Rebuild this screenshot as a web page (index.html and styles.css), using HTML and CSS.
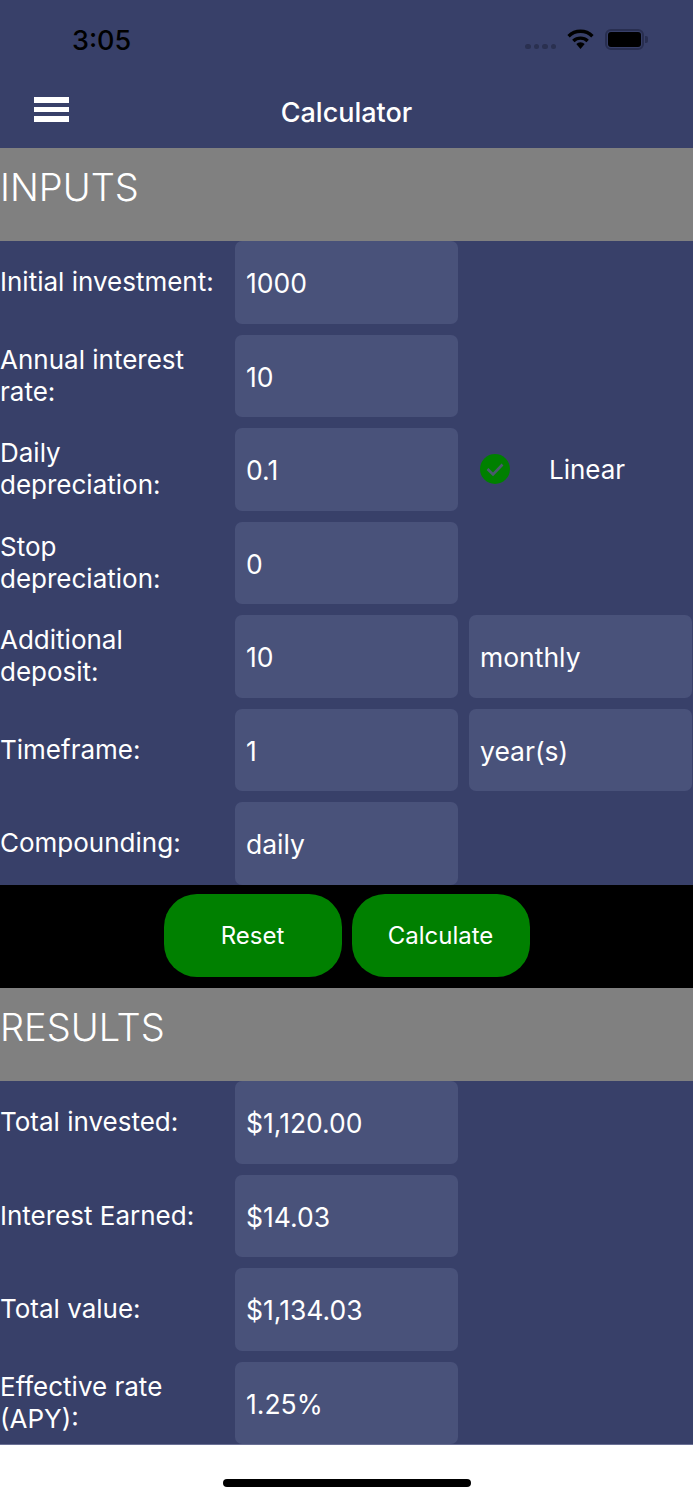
FILE: index.html
```html
<html>
<head>
    <link rel="stylesheet" href="styles.css">
</head>
<body>
    <div class="status-bar">
        <span class="time">3:05</span>
        <div class="status-icons">
            <div class="signal"><i></i><i></i><i></i><i></i></div>
            <svg class="wifi" width="27" height="21" viewBox="0 0 28 22">
                <path d="M1.5 7.5a18 18 0 0 1 25 0" fill="none" stroke="#000" stroke-width="3.6"/>
                <path d="M6.5 12.5a11 11 0 0 1 15 0" fill="none" stroke="#000" stroke-width="3.6"/>
                <path d="M9.6 15.6 14 21l4.4-5.4a6.4 6.4 0 0 0-8.8 0z" fill="#000"/>
            </svg>
            <div class="battery"><div class="battery-level"></div></div>
            <div class="battery-cap"></div>
        </div>
    </div>

    <div class="header">
        <div class="menu-icon"><i></i><i></i><i></i></div>
        <div class="title">Calculator</div>
    </div>

    <div class="section-head">INPUTS</div>
    <div class="rows">
        <div class="label">Initial investment:</div>
        <div class="field">1000</div>
        <div></div>

        <div class="label">Annual interest rate:</div>
        <div class="field">10</div>
        <div></div>

        <div class="label">Daily depreciation:</div>
        <div class="field">0.1</div>
        <div class="checkbox">
            <svg class="check" width="30" height="30" viewBox="0 0 30 30">
                <circle cx="15" cy="15" r="15" fill="#008000"/>
                <path d="M7.5 15l5.5 5.5 9.5-10" fill="none" stroke="#4a5a6e" stroke-width="2.6"/>
            </svg>
            <span>Linear</span>
        </div>

        <div class="label">Stop depreciation:</div>
        <div class="field">0</div>
        <div></div>

        <div class="label">Additional deposit:</div>
        <div class="field">10</div>
        <div class="field">monthly</div>

        <div class="label">Timeframe:</div>
        <div class="field">1</div>
        <div class="field">year(s)</div>

        <div class="label">Compounding:</div>
        <div class="field">daily</div>
        <div></div>
    </div>

    <div class="actions">
        <button class="btn">Reset</button>
        <button class="btn">Calculate</button>
    </div>

    <div class="section-head">RESULTS</div>
    <div class="rows">
        <div class="label">Total invested:</div>
        <div class="field">$1,120.00</div>
        <div></div>

        <div class="label">Interest Earned:</div>
        <div class="field">$14.03</div>
        <div></div>

        <div class="label">Total value:</div>
        <div class="field">$1,134.03</div>
        <div></div>

        <div class="label">Effective rate (APY):</div>
        <div class="field">1.25%</div>
        <div></div>
    </div>

    <div class="home-area">
        <div class="home-bar"></div>
    </div>
</body>
</html>
```

FILE: styles.css
```css
body {
    font-family: Inter, "Liberation Sans", sans-serif;
    background-color: #fff;
    color: #fff;
    margin: 0;
    width: 693px;
}
.status-bar {
    height: 78px;
    background-color: #384069;
    display: flex;
    justify-content: space-between;
    align-items: center;
    box-sizing: border-box;
    padding: 0 45px 0 72px;
}
.time {
    color: #000;
    font-size: 27px;
    font-weight: 500;
    margin-top: 2px;
}
.status-icons {
    display: flex;
    align-items: center;
}
.signal {
    display: flex;
    gap: 3px;
    margin: 15px 11px 0 0;
}
.signal i {
    width: 5.5px;
    height: 5.5px;
    border-radius: 50%;
    background-color: #2a3050;
}
.wifi {
    margin-right: 11px;
}
.battery {
    width: 39px;
    height: 21px;
    box-sizing: border-box;
    border: 2px solid #282e50;
    border-radius: 6px;
    padding: 1px;
}
.battery-level {
    height: 100%;
    background-color: #000;
    border-radius: 3px;
}
.battery-cap {
    width: 3px;
    height: 7px;
    margin-left: 1px;
    background-color: #282e50;
    border-radius: 0 2px 2px 0;
}
.header {
    height: 70px;
    background-color: #384069;
    display: flex;
    align-items: center;
    justify-content: center;
    position: relative;
}
.menu-icon {
    position: absolute;
    left: 34px;
    top: 19px;
    width: 35px;
    display: flex;
    flex-direction: column;
    gap: 4px;
}
.menu-icon i {
    height: 5.5px;
    background-color: #fff;
}
.title {
    font-size: 27px;
    font-weight: 500;
    margin-bottom: 1px;
}
.section-head {
    height: 93px;
    background-color: #808080;
    font-size: 38px;
    font-weight: 300;
    line-height: 79px;
}
.rows {
    background-color: #384069;
    display: grid;
    grid-template-columns: 224px 223px 223px;
    grid-auto-rows: 82.5px;
    column-gap: 11px;
    row-gap: 11px;
}
.label {
    font-size: 26px;
    line-height: 32px;
    align-self: center;
}
.field {
    background-color: #49527a;
    border-radius: 7px;
    font-size: 26.5px;
    line-height: 84px;
    padding-left: 11px;
}
.checkbox {
    display: flex;
    align-items: center;
    padding-left: 11px;
    font-size: 26px;
}
.checkbox span {
    margin-left: 39px;
}
.actions {
    height: 103.5px;
    background-color: #000;
    display: flex;
    justify-content: center;
    gap: 10px;
    padding-top: 9px;
    box-sizing: border-box;
}
.btn {
    width: 178px;
    height: 83px;
    background-color: #008000;
    border: none;
    border-radius: 33px;
    color: #fff;
    font-family: inherit;
    font-size: 24px;
    padding-top: 2px;
}
.home-area {
    height: 56px;
    background-color: #fff;
    border-top: 1px solid #6a7095;
    box-sizing: border-box;
    display: flex;
    justify-content: center;
    padding-top: 34px;
}
.home-bar {
    width: 248px;
    height: 8px;
    background-color: #000;
    border-radius: 4px;
}
```
